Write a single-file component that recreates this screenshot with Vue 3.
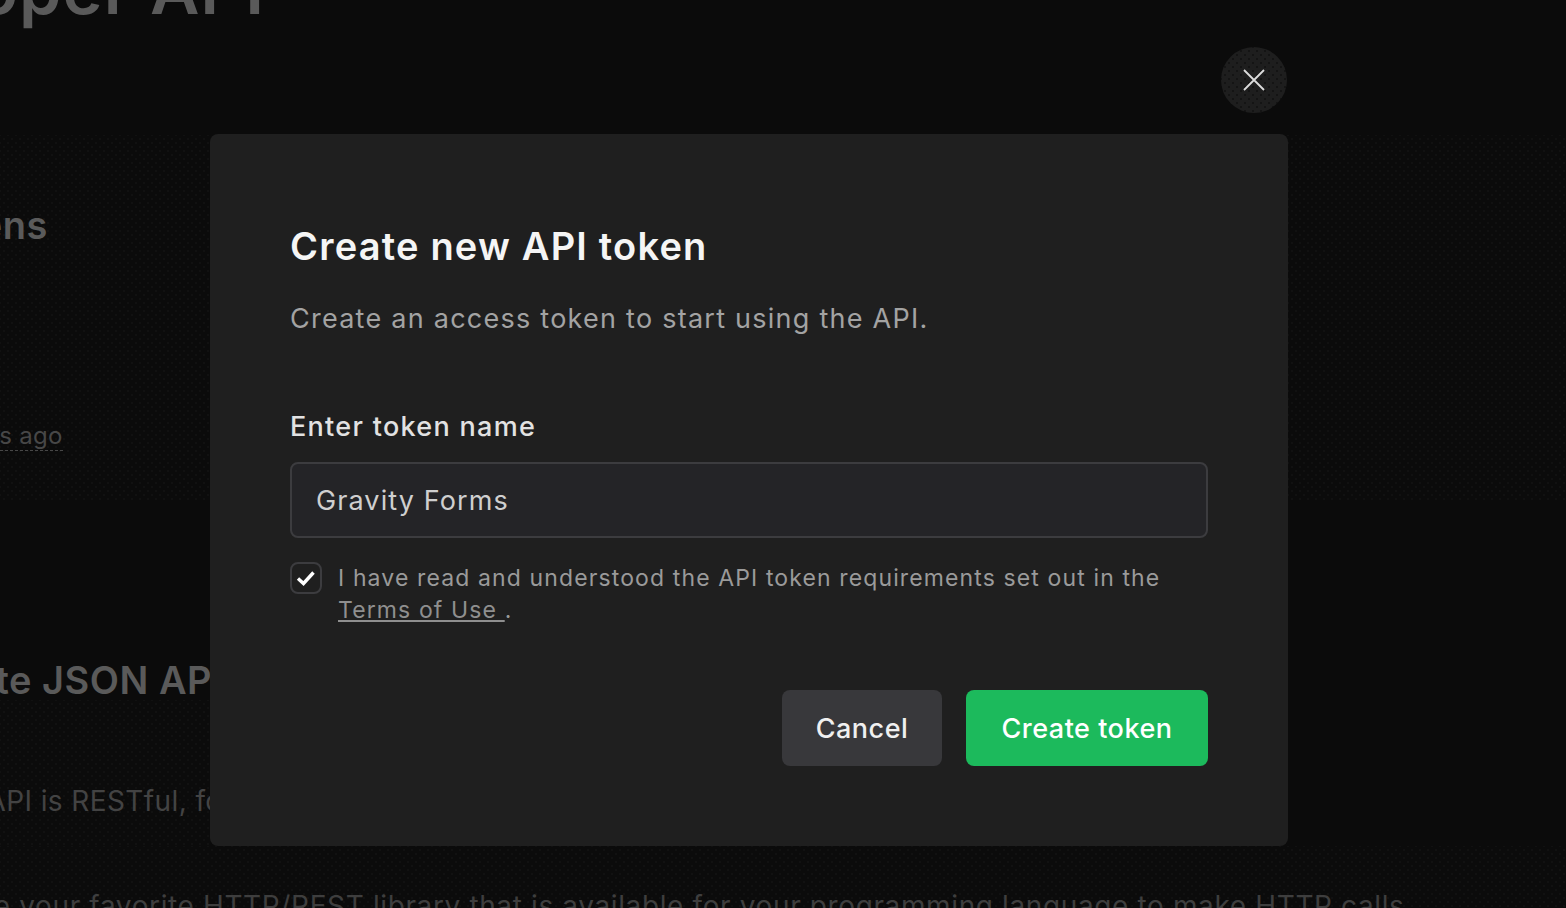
<script setup>
import { ref } from 'vue'
const tokenName = ref('Gravity Forms')
const accepted = ref(true)
</script>

<template>
  <div class="page">
    <div class="dots dots-top"></div>
    <div class="dots dots-left"></div>
    <div class="dots dots-bottom"></div>
    <div class="backdrop">
      <h1 class="b-title">Developer API</h1>
      <h2 class="b-tokens">API tokens</h2>
      <div class="b-ago"><span>2 days ago</span></div>
      <h2 class="b-json">Complete JSON API</h2>
      <p class="b-rest">The API is RESTful, for use with any client library</p>
      <p class="b-lib">Use your favorite HTTP/REST library that is available for your programming language to make HTTP calls.</p>
    </div>
    <div class="overlay">
      <div class="modal-wrap">
        <button class="close" aria-label="Close">
          <svg width="24" height="24" viewBox="0 0 24 24" fill="none" stroke="#dcdcdc" stroke-width="1.8">
            <path d="M2 2 L22 22 M22 2 L2 22" />
          </svg>
        </button>
        <div class="modal">
          <h3 class="title">Create new API token</h3>
          <p class="sub">Create an access token to start using the API.</p>
          <label class="label" for="tk">Enter token name</label>
          <input id="tk" v-model="tokenName" class="input" />
          <div class="check-row">
            <span class="box" @click="accepted = !accepted">
              <svg v-if="accepted" width="20" height="20" viewBox="0 0 20 20" fill="none" stroke="#fff" stroke-width="3.4">
                <path d="M2 10.5 L7.5 15.5 L17.5 4.5" />
              </svg>
            </span>
            <p class="terms">I have read and understood the API token requirements set out in the <a class="link">Terms of Use </a>.</p>
          </div>
          <div class="actions">
            <button class="btn cancel">Cancel</button>
            <button class="btn create">Create token</button>
          </div>
        </div>
      </div>
    </div>
  </div>
</template>

<style>
html, body { margin: 0; background: #0b0b0b; }
</style>

<style scoped>
.page {
  width: 1566px;
  height: 908px;
  overflow: hidden;
  position: relative;
  background-color: #0b0b0b;
  font-family: Inter, "Liberation Sans", sans-serif;
}
.backdrop {
  position: relative;
  color: #5a5a5a;
  white-space: nowrap;
}
.backdrop h1, .backdrop h2, .backdrop p { margin: 0; }
.b-title { font-size: 68px; line-height: 64px; font-weight: 600; letter-spacing: 1px; margin: -43px 0 0 -213px !important; }
.b-tokens { font-size: 38px; line-height: 44px; font-weight: 600; letter-spacing: .5px; margin: 182px 0 0 -153px !important; }
.b-ago { font-size: 24px; line-height: 32px; letter-spacing: .3px; margin: 173px 0 0 -65px; color: #474747; }
.b-ago span { border-bottom: 1px dashed #474747; }
.b-json { font-size: 38px; line-height: 44px; font-weight: 600; letter-spacing: .5px; margin: 206px 0 0 -149px !important; }
.b-rest { font-size: 28px; line-height: 40px; margin: 79px 0 0 -74px !important; color: #434343; letter-spacing: .4px; }
.b-lib { font-size: 28px; line-height: 40px; margin: 65px 0 0 -43px !important; color: #3e3e3e; letter-spacing: .62px; }
.dots {
  position: absolute;
  background-image: radial-gradient(#111 .9px, transparent 1.2px), radial-gradient(#111 .9px, transparent 1.2px);
  background-size: 8px 8px;
  background-position: 0 0, 4px 4px;
  pointer-events: none;
}
.dots-top { top: 135px; left: 0; right: 0; height: 366px; }
.dots-left { top: 700px; left: 0; width: 210px; height: 146px; }
.dots-bottom { top: 846px; left: 0; right: 0; bottom: 0; }
.overlay {
  position: absolute;
  inset: 0;
  display: flex;
  justify-content: flex-start;
  align-items: flex-start;
  padding: 134px 0 0 210px;
}
.modal-wrap {
  position: relative;
}
.close {
  position: absolute;
  top: -87px;
  right: 1px;
  width: 66px;
  height: 66px;
  border: 0;
  padding: 0;
  border-radius: 50%;
  background-color: #1e1e1e;
  background-image: radial-gradient(#141414 1px, transparent 1.2px), radial-gradient(#141414 1px, transparent 1.2px);
  background-size: 8px 8px;
  background-position: 0 0, 4px 4px;
  display: flex;
  align-items: center;
  justify-content: center;
}
.modal {
  width: 1078px;
  height: 712px;
  box-sizing: border-box;
  padding: 88px 80px 80px 80px;
  background: #1f1f1f;
  border-radius: 8px;
  display: flex;
  flex-direction: column;
}
.title { margin: 0; font-size: 38px; line-height: 48px; font-weight: 600; color: #f5f5f5; letter-spacing: 1.2px; }
.sub { margin: 29px 0 0; font-size: 27px; line-height: 40px; color: #a3a3a3; letter-spacing: 1.25px; }
.label { margin-top: 68px; font-size: 27px; line-height: 40px; font-weight: 500; color: #e2e2e2; letter-spacing: 1.3px; }
.input {
  margin-top: 15px;
  width: 100%;
  height: 76px;
  box-sizing: border-box;
  padding: 0 24px;
  background: #242427;
  border: 2px solid #3c3c3f;
  border-radius: 8px;
  color: #cfcfcf;
  font: 400 27px Inter, "Liberation Sans", sans-serif;
  letter-spacing: 1.1px;
  outline: none;
}
.check-row { display: flex; gap: 16px; margin-top: 24px; }
.box {
  flex: none;
  width: 32px;
  height: 32px;
  box-sizing: border-box;
  border: 2px solid #3c3c3f;
  border-radius: 8px;
  display: flex;
  align-items: center;
  justify-content: center;
}
.terms { margin: 0; font-size: 23px; line-height: 32px; color: #9a9a9a; letter-spacing: 1.12px; }
.link { text-decoration: underline; color: #8f8f8f; }
.actions { display: flex; justify-content: flex-end; gap: 24px; margin-top: auto; }
.btn {
  height: 76px;
  border: 0;
  border-radius: 8px;
  font: 500 27px Inter, "Liberation Sans", sans-serif;
  letter-spacing: .5px;
  padding: 0;
}
.cancel { width: 160px; background: #38383b; color: #f0f0f0; }
.create { width: 242px; background: #1cba5c; color: #fff; }
</style>
